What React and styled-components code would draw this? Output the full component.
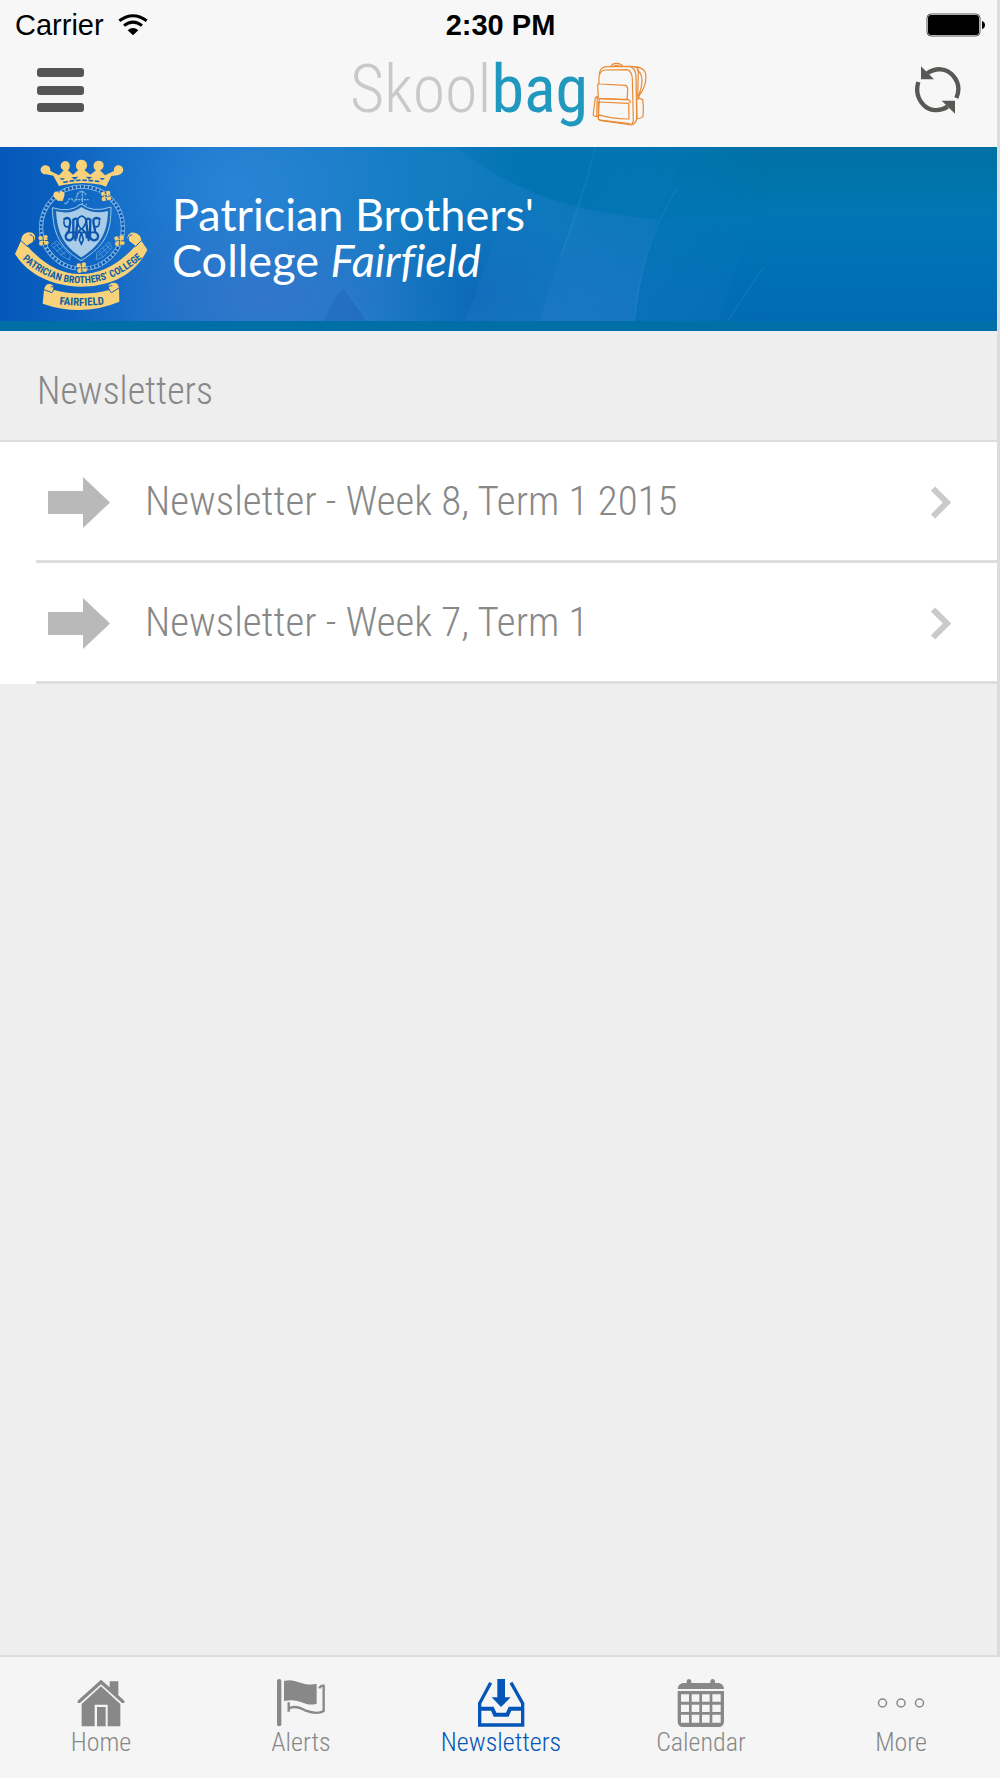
import React from "react";
import styled, { createGlobalStyle } from "styled-components";

const sans = `"Liberation Sans", Arial, sans-serif`;
const condensed = `"Roboto Condensed", Roboto, sans-serif`;

const GlobalStyle = createGlobalStyle`
  *, *::before, *::after { box-sizing: border-box; }
  body { margin: 0; background: #f5f5f5; font-family: ${sans}; }
`;

const Page = styled.div`
  display: flex;
  flex-direction: column;
  min-height: 100vh;
`;

const Screen = styled.div`
  flex: 1;
  display: flex;
  flex-direction: column;
  background: #eeeeee;
  border-right: 3px solid #dcdcdc;
`;

const StatusBar = styled.div`
  display: grid;
  grid-template-columns: 1fr auto 1fr;
  align-items: center;
  height: 50px;
  padding: 0 11px 0 15px;
  background: #f7f7f7;
  color: #000;
  font-size: 29px;
  line-height: 32px;
`;

const Carrier = styled.div`
  display: flex;
  align-items: center;
  gap: 14px;
`;

const Clock = styled.time`
  font-weight: 700;
`;

const Battery = styled.svg`
  justify-self: end;
`;

const NavBar = styled.header`
  display: grid;
  grid-template-columns: 1fr auto 1fr;
  align-items: center;
  height: 97px;
  padding: 0 36px 18px;
  background: #f7f7f7;
`;

const IconButton = styled.button`
  display: flex;
  justify-self: ${(p) => p.$side};
  padding: 0;
  border: 0;
  background: none;
  cursor: pointer;
`;

const Logo = styled.div`
  display: flex;
  align-items: flex-end;
  gap: 4px;
`;

const LogoText = styled.div`
  font-family: ${condensed};
  font-weight: 300;
  font-size: 66px;
  line-height: 72px;
  color: #c9c9c9;
`;

const LogoAccent = styled.span`
  font-weight: 400;
  color: #2199bf;
`;

const Banner = styled.section`
  position: relative;
  display: flex;
  align-items: center;
  gap: 24px;
  height: 184px;
  padding: 0 14px;
  border-bottom: 10px solid #006fa8;
  background: #0073b5;
  overflow: hidden;
`;

const BannerArt = styled.svg`
  position: absolute;
  inset: 0;
  width: 100%;
  height: 100%;
`;

const Crest = styled.svg`
  position: relative;
  flex: none;
`;

const SchoolName = styled.h1`
  position: relative;
  margin: 0;
  padding-top: 6px;
  font-family: Lato, sans-serif;
  font-weight: 400;
  font-size: 45px;
  font-variant-ligatures: none;
  line-height: 46px;
  color: #fff;
`;

const SectionTitle = styled.h2`
  margin: 0;
  padding: 36px 37px 25px;
  border-bottom: 2px solid #dcdcdc;
  font-family: ${condensed};
  font-weight: 300;
  font-size: 38px;
  line-height: 48px;
  color: #888;
`;

const List = styled.ul`
  margin: 0;
  padding: 0 0 0 36px;
  list-style: none;
  background: #fff;
`;

const Row = styled.a`
  display: flex;
  align-items: center;
  height: 121px;
  padding: 2px 46px 0 12px;
  border-bottom: 3px solid #dedede;
  color: #888;
  text-decoration: none;
`;

const RowLabel = styled.span`
  flex: 1;
  padding: 0 0 2px 34px;
  font-family: ${condensed};
  font-weight: 300;
  font-size: 41px;
  line-height: 48px;
`;

const TabBar = styled.nav`
  display: grid;
  grid-template-columns: repeat(5, 1fr);
  height: 123px;
  border-top: 2px solid #dcdcdc;
  background: #f5f5f5;
`;

const Tab = styled.a`
  display: flex;
  flex-direction: column;
  align-items: center;
  padding: 22px 0 0 2px;
  font-family: ${condensed};
  font-weight: 300;
  font-size: 26px;
  line-height: 30px;
  color: ${(p) => (p.$active ? "#0356b8" : "#888")};
  text-decoration: none;
`;

const WifiIcon = () => (
  <svg width="30" height="22" viewBox="0 0 90 66" fill="none" stroke="#000" strokeWidth="9">
    <path d="M4 20Q45-10 86 20" />
    <path d="M18 35Q45 14 72 35" />
    <path d="M29 49Q45 35 61 49L45 64Z" fill="#000" stroke="none" />
  </svg>
);

const BatteryIcon = () => (
  <Battery width="60" height="24" viewBox="0 0 60 24" aria-label="Battery full">
    <rect x="1" y="1" width="53" height="22" rx="4" fill="#fff" stroke="#555" />
    <rect x="2" y="2" width="51" height="20" rx="3" />
    <path d="M56 8q3 1 3 4t-3 4z" />
  </Battery>
);

const MenuIcon = () => (
  <svg width="48" height="46" viewBox="0 0 48 46" fill="#555">
    <rect x="1" y="1" width="47" height="9" rx="3" />
    <rect x="1" y="19" width="47" height="9" rx="3" />
    <rect x="1" y="36" width="47" height="9" rx="3" />
  </svg>
);

const RefreshIcon = () => (
  <svg width="46" height="48" viewBox="0 0 138 144" fill="none" stroke="#585955" strokeWidth="13">
    <path d="M37 22C61 4 95 5 115 30C132 50 133 75 124 96" />
    <path d="M10 48C2 75 6 96 25 116C43 135 74 138 98 122" />
    <path d="M18 1V40H57Z" fill="#585955" stroke="none" />
    <path d="M120 143V104H80Z" fill="#585955" stroke="none" />
  </svg>
);

const BackpackIcon = () => (
  <svg width="55" height="64" viewBox="34 37 165 192" fill="none" stroke="#e98b35" strokeWidth="3.6" strokeLinejoin="round">
    <path d="M55 102C54 85 54 71 60 60Q64 53 75 51L145 50Q164 52 166 80L168 205Q167 221 152 226L62 213Q52 212 52 198" />
    <path d="M57 74Q61 61 77 61L138 60Q154 63 155 88L158 212Q156 224 150 224" />
    <path d="M91 50Q94 41 108 41Q121 42 126 49M98 50Q106 45 119 50" />
    <path d="M51 106Q51 102 58 103L134 107Q141 109 141 119L140 144Q139 150 130 150L53 146Z" />
    <path d="M52 147L142 150Q149 151 149 160M53 157L144 161L145 208Q99 209 53 195ZM56 147L53 206Q53 212 65 212L148 222" />
    <path d="M50 139L44 145L38 190Q37 200 44 200H54M50 139L48 199" />
    <path d="M145 50Q190 49 195 72Q199 106 178 134L172 148M157 52Q166 48 173 61L171 145M169 62Q181 66 184 88Q185 111 173 139" />
    <path d="M167 151L176 146L186 150Q190 176 187 201Q179 208 168 208M168 151L169 209" />
  </svg>
);

const BannerBackdrop = () => (
  <BannerArt viewBox="0 0 1000 174" preserveAspectRatio="none" aria-hidden="true">
    <defs>
      <linearGradient id="sea" x1="0" y1="0" x2="0" y2="1">
        <stop offset="0" stopColor="#0070a4" />
        <stop offset="0.12" stopColor="#0073a6" />
        <stop offset="0.4" stopColor="#0076b5" />
        <stop offset="1" stopColor="#006bb4" />
      </linearGradient>
      <linearGradient id="lit" x1="0" y1="0" x2="1" y2="0">
        <stop offset="0" stopColor="#0558b9" />
        <stop offset="0.15" stopColor="#1069c4" />
        <stop offset="0.32" stopColor="#217ccc" />
        <stop offset="0.55" stopColor="#137dc2" />
        <stop offset="0.78" stopColor="#0d76bd" />
        <stop offset="1" stopColor="#0073b5" />
      </linearGradient>
      <linearGradient id="fade" x1="0" y1="0" x2="1" y2="0">
        <stop offset="0.6" stopColor="#fff" />
        <stop offset="1" stopColor="#fff" stopOpacity="0" />
      </linearGradient>
      <mask id="leftSide">
        <rect width="770" height="174" fill="url(#fade)" />
      </mask>
      <radialGradient id="glow">
        <stop offset="0" stopColor="#2f88dc" stopOpacity="0.6" />
        <stop offset="1" stopColor="#2f88dc" stopOpacity="0" />
      </radialGradient>
      <radialGradient id="violet">
        <stop offset="0" stopColor="#3674ca" stopOpacity="0.8" />
        <stop offset="1" stopColor="#3674ca" stopOpacity="0" />
      </radialGradient>
      <radialGradient id="dusk">
        <stop offset="0" stopColor="#0a60b4" stopOpacity="0.65" />
        <stop offset="1" stopColor="#0a60b4" stopOpacity="0" />
      </radialGradient>
      <linearGradient id="canopy" x1="0" y1="0" x2="1" y2="0">
        <stop offset="0" stopColor="#0073b0" stopOpacity="0.3" />
        <stop offset="0.25" stopColor="#0073b0" stopOpacity="0.9" />
        <stop offset="0.6" stopColor="#0075b2" stopOpacity="0.7" />
        <stop offset="1" stopColor="#0075b2" stopOpacity="0" />
      </linearGradient>
      <linearGradient id="beam" x1="0" y1="0" x2="0" y2="1">
        <stop offset="0" stopColor="#2b84cb" stopOpacity="0.05" />
        <stop offset="1" stopColor="#2b7ccb" stopOpacity="0.5" />
      </linearGradient>
    </defs>
    <rect width="1000" height="174" fill="url(#sea)" />
    <rect width="770" height="174" fill="url(#lit)" mask="url(#leftSide)" />
    <ellipse cx="230" cy="40" rx="180" ry="110" fill="url(#glow)" />
    <ellipse cx="270" cy="150" rx="210" ry="90" fill="url(#violet)" />
    <ellipse cx="475" cy="150" rx="110" ry="110" fill="url(#dusk)" />
    <path d="M325 174Q334 152 345 141L369 174Z" fill="#1d61b8" opacity="0.4" />
    <path d="M467 174L530 0H597L541 174Z" fill="url(#beam)" opacity="0.5" />
    <path d="M541 174L597 0H690Q646 90 636 174Z" fill="url(#beam)" />
    <path d="M636 174Q641 120 667 72L760 60L720 174Z" fill="url(#beam)" opacity="0.25" />
    <path d="M455 0C510 42 575 66 655 72C715 70 755 45 790 0Z" fill="url(#canopy)" />
    <path d="M597 0Q582 60 562 110M680 40Q646 90 636 174M345 141L369 174M766 120L730 174" fill="none" stroke="#5aa7dc" strokeWidth="1.5" opacity="0.14" />
  </BannerArt>
);

const Rosette = ({ x, y }) => (
  <g transform={`translate(${x} ${y})`} fill="#f6cf74" stroke="none">
    <circle cx="-9" cy="-7" r="6" />
    <circle cx="7" cy="-10" r="6" />
    <circle cx="-7" cy="10" r="6" />
    <circle cx="10" cy="7" r="6" />
    <path d="M-13-2L13-5V4L-12 6ZM-4-13L4-14L6 13L-2 14Z" />
    <path d="M-2-14L0-5M14 0L5 1M2 14L0 5M-14 2L-5 0" stroke="#0b5eb8" strokeWidth="3" />
    <circle r="3" fill="#0b5eb8" />
  </g>
);

const SchoolCrest = () => (
  <Crest width="134" height="153" viewBox="42 55 402 459" role="img" aria-label="Patrician Brothers' College Fairfield crest">
    <defs>
      <path id="motto" d="M57 350Q140 431 243 431Q346 431 436 346" />
      <path id="place" d="M140 489Q245 507 350 489" />
    </defs>
    <circle cx="246" cy="264" r="123" fill="none" stroke="#82b9e6" strokeWidth="13" />
    <circle cx="246" cy="264" r="123" fill="none" stroke="#0c58b1" strokeWidth="8" strokeDasharray="8 4" />
    <g fill="#f8d27a">
      <path d="M177 139L160 108L139 104C120 105 116 84 130 78C144 73 153 84 151 94L177 107L191 92C176 85 181 64 197 64C211 66 213 84 204 92L219 105L235 91C223 85 227 60 244 60C263 60 267 83 253 91L271 105L288 92C275 83 280 62 298 63C315 65 315 86 300 92L315 107L342 94C340 79 353 72 365 80C375 91 368 105 352 107L334 109L318 141L303 135Q246 124 190 136Z" />
      <path d="M173 183L160 170C158 156 172 151 177 160C188 148 198 160 192 172L188 184Z" />
    </g>
    <path d="M190 128Q246 116 304 127" fill="none" stroke="#1262b9" strokeWidth="5" strokeDasharray="14 5" />
    <path d="M178 116L187 122L195 116ZM214 113L225 120L235 111ZM257 111L267 119L277 112ZM298 116L307 122L315 115Z" fill="#1262b9" />
    <path d="M193 190q9 5 11-6q4-10 12-6q8 12 13 2q1-19 12-24M224 180H266M247 153V208M231 164q16-18 27 2M236 195q11 16 24-2" fill="none" stroke="#78b5e5" strokeWidth="4" strokeDasharray="7 2" />
    <path d="M157 204Q211 221 243 193Q278 221 333 202C333 272 320 317 243 363C169 319 159 266 157 204Z" fill="#1466b9" stroke="#9ac9ec" strokeWidth="3" />
    <path d="M168 215Q216 226 244 202Q279 226 324 214C322 276 305 314 244 353C184 315 172 271 168 215Z" fill="#a9cde8" />
    <g fill="none" stroke="#0c55ad" strokeWidth="7" strokeLinecap="round">
      <path d="M193 238Q210 229 211 247L206 277Q192 288 199 298Q212 308 220 293L220 240Q235 230 232 250L226 301M299 238Q280 229 280 247L286 278Q299 286 292 298Q278 308 270 293L271 240Q257 230 259 250L266 301" />
      <path d="M245 229Q220 239 243 268Q228 281 231 294M246 229Q270 239 246 268Q262 281 259 294M244 277L238 301L244 313L250 300ZM192 244Q190 265 207 261M298 244Q300 265 283 261M201 278H286" strokeWidth="5" />
    </g>
    <g fill="none" stroke="#4c98d6" strokeWidth="3">
      <path d="M154 317L170 303L211 347L208 361L188 350ZM160 324L177 312M169 335L187 323M181 347L199 336M165 311L195 347M290 340L327 307L336 324L309 352L289 360ZM297 336L310 352M309 325L321 340M319 315L330 329M292 350L330 317" />
    </g>
    <Rosette x={318} y={169} />
    <Rosette x={130} y={302} />
    <Rosette x={358} y={303} />
    <Rosette x={245} y={384} />
    <g fill="#f8d27a">
      <path d="M63 303C65 282 82 274 98 280C111 288 106 308 91 311L81 318Q159 406 243 403Q330 403 406 319L396 310C380 303 377 287 393 279C410 276 424 288 424 303L442 330C404 410 324 441 243 441C159 440 85 406 45 343Z" />
      <path d="M132 450Q136 431 150 433Q165 436 159 450Q245 473 330 450Q320 438 333 431Q354 425 357 445L358 486Q246 533 128 492Z" />
    </g>
    <path d="M63 303L84 322L100 307Q106 287 89 285M424 303L406 321L386 305Q380 288 397 285M132 450L156 459L163 447Q161 438 152 441M357 445L334 459L325 447Q324 438 337 438" fill="none" stroke="#1262b9" strokeWidth="3" />
    <g fill="#1261a5" fontFamily={condensed} fontWeight="700">
      <text fontSize="30" textAnchor="middle">
        <textPath href="#motto" startOffset="50%">PATRICIAN BROTHERS’ COLLEGE</textPath>
      </text>
      <text fontSize="33" textAnchor="middle">
        <textPath href="#place" startOffset="50%">FAIRFIELD</textPath>
      </text>
    </g>
  </Crest>
);

const ArrowIcon = () => (
  <svg width="63" height="51" viewBox="0 0 63 51" fill="#b9b9b9">
    <path d="M0 14H35V0L62 25.500L35 51V37H0Z" />
  </svg>
);

const ChevronIcon = () => (
  <svg width="20" height="33" viewBox="0 0 20 33" fill="none" stroke="#cacaca" strokeWidth="6">
    <path d="M2 2.500L16 16.500L2 30.500" />
  </svg>
);

const HomeIcon = () => (
  <svg width="48" height="48" viewBox="0 0 144 144" fill="currentColor">
    <path d="M2 65L72 2L98 25V7H124V49L142 65V72H135L72 16L9 72H2Z" />
    <path d="M14 75L72 22L130 75V142H92V77H53V142H14Z" />
    <rect x="60" y="84" width="26" height="58" />
  </svg>
);

const AlertsIcon = () => (
  <svg width="48" height="48" viewBox="0 0 144 144" fill="currentColor">
    <rect x="0" y="0" width="13" height="142" rx="6" />
    <path d="M21 6C56-5 73 23 119 15V74C83 86 73 55 21 66Z" />
    <path d="M127 28Q131 18 140 20V96Q122 108 84 94Q53 77 35 89V98M35 70V98" fill="none" stroke="currentColor" strokeWidth="7" />
  </svg>
);

const NewslettersIcon = () => (
  <svg width="48" height="48" viewBox="0 0 144 144" fill="none" stroke="currentColor" strokeWidth="9">
    <path d="M41 11L8 73V138H137V73L102 11" strokeWidth="10" />
    <path d="M8 89H46L54 107H91L99 89H137" strokeWidth="12" />
    <path d="M61 0H84V55H101L72 84L44 55H61Z" fill="currentColor" stroke="none" />
  </svg>
);

const CalendarIcon = () => (
  <svg width="48" height="48" viewBox="0 0 144 144" fill="currentColor">
    <path d="M2 30Q3 15 18 12H29V6Q30 0 36 0T43 6V12H100V6Q101 0 107 0T114 6V12H126Q140 15 141 30Z" />
    <path
      fillRule="evenodd"
      d="M2 36H141V128Q140 143 126 144H17Q3 143 2 128ZM12 46V68H36V46ZM44 46V68H67V46ZM75 46V68H98V46ZM106 46V68H131V46ZM12 77V99H36V77ZM44 77V99H67V77ZM75 77V99H98V77ZM106 77V99H131V77ZM12 107V131H36V107ZM44 107V131H67V107ZM75 107V131H98V107ZM106 107V131H131V107Z"
    />
  </svg>
);

const MoreIcon = () => (
  <svg width="48" height="48" viewBox="0 0 48 48" fill="none" stroke="currentColor" strokeWidth="1.500">
    <circle cx="5.500" cy="24" r="4" />
    <circle cx="24" cy="24" r="4" />
    <circle cx="42.500" cy="24" r="4" />
  </svg>
);

const newsletters = ["Newsletter - Week 8, Term 1 2015", "Newsletter - Week 7, Term 1"];

const tabs = [
  { label: "Home", Icon: HomeIcon },
  { label: "Alerts", Icon: AlertsIcon },
  { label: "Newsletters", Icon: NewslettersIcon, active: true },
  { label: "Calendar", Icon: CalendarIcon },
  { label: "More", Icon: MoreIcon },
];

export default function App() {
  return (
    <Page>
      <GlobalStyle />
      <Screen>
        <StatusBar>
          <Carrier>
            Carrier
            <WifiIcon />
          </Carrier>
          <Clock>2:30 PM</Clock>
          <BatteryIcon />
        </StatusBar>
        <NavBar>
          <IconButton type="button" aria-label="Menu" $side="start">
            <MenuIcon />
          </IconButton>
          <Logo>
            <LogoText>
              Skool<LogoAccent>bag</LogoAccent>
            </LogoText>
            <BackpackIcon />
          </Logo>
          <IconButton type="button" aria-label="Refresh" $side="end">
            <RefreshIcon />
          </IconButton>
        </NavBar>
        <Banner>
          <BannerBackdrop />
          <SchoolCrest />
          <SchoolName>
            Patrician Brothers'
            <br />
            College <em>Fairfield</em>
          </SchoolName>
        </Banner>
        <main>
          <SectionTitle>Newsletters</SectionTitle>
          <List>
            {newsletters.map((title) => (
              <li key={title}>
                <Row href="#newsletter">
                  <ArrowIcon />
                  <RowLabel>{title}</RowLabel>
                  <ChevronIcon />
                </Row>
              </li>
            ))}
          </List>
        </main>
      </Screen>
      <TabBar>
        {tabs.map(({ label, Icon, active }) => (
          <Tab key={label} href={`#${label.toLowerCase()}`} $active={active} aria-current={active ? "page" : undefined}>
            <Icon />
            {label}
          </Tab>
        ))}
      </TabBar>
    </Page>
  );
}
